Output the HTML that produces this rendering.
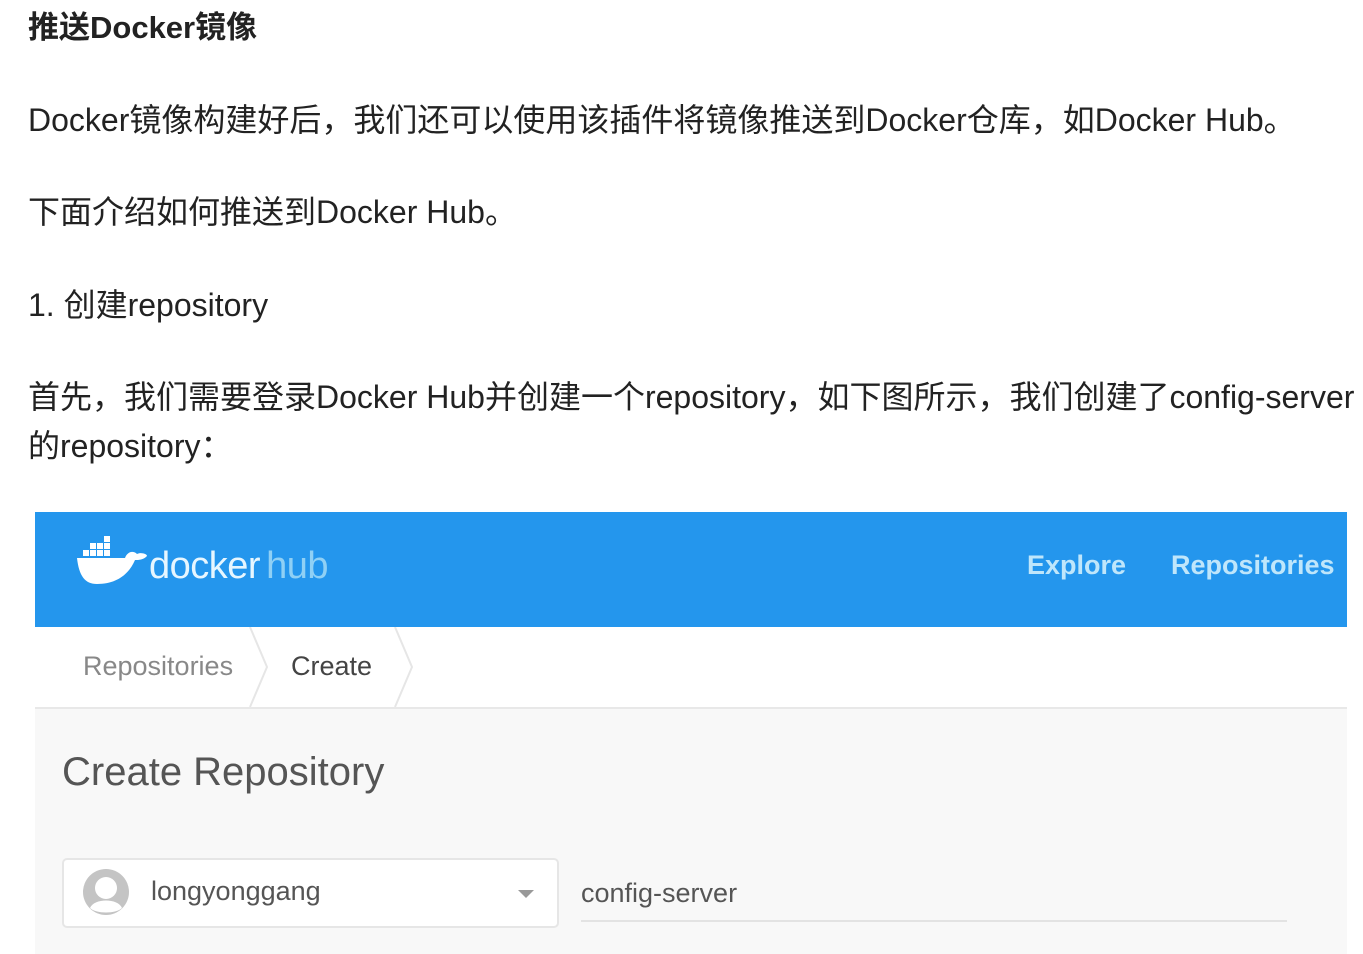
<!DOCTYPE html>
<html><head><meta charset="utf-8"><style>
body{margin:0;width:1363px;height:954px;overflow:hidden;background:#fff;font-family:"Liberation Sans","Noto Sans CJK SC",sans-serif;color:#222;position:relative}
.t{position:absolute;left:28px;white-space:nowrap;font-size:32px;line-height:48px}
.shot{position:absolute;left:35px;top:512px;width:1312px;height:442px;background:#f8f8f8;overflow:hidden}
.bar{position:absolute;left:0;top:0;width:1312px;height:115px;background:#2496ed}
.nav{position:absolute;top:38px;color:#bfe6fb;font-weight:bold;font-size:27px}
.crumb{position:absolute;left:0;top:115px;width:1312px;height:80px;background:#fff;border-bottom:2px solid #e8e8e8}
.g{color:#888;font-size:27px;position:absolute;top:139px}
</style></head><body>
<div class="t" style="top:4px;font-weight:bold;font-size:31px">推送Docker镜像</div>
<div class="t" style="top:96px">Docker镜像构建好后，我们还可以使用该插件将镜像推送到Docker仓库，如Docker Hub。</div>
<div class="t" style="top:188px">下面介绍如何推送到Docker Hub。</div>
<div class="t" style="top:281px">1. 创建repository</div>
<div class="t" style="top:373px">首先，我们需要登录Docker Hub并创建一个repository，如下图所示，我们创建了config-server</div>
<div class="t" style="top:422px">的repository：</div>
<div class="shot">
<div class="bar">
<svg style="position:absolute;left:42px;top:24px" width="72" height="50" viewBox="0 0 72 50"><g fill="#fff"><rect x="6" y="14" width="6" height="6"/><rect x="13" y="14" width="6" height="6"/><rect x="20" y="14" width="6" height="6"/><rect x="27" y="14" width="6" height="6"/><rect x="13" y="7" width="6" height="6"/><rect x="20" y="7" width="6" height="6"/><rect x="27" y="7" width="6" height="6"/><rect x="27" y="0" width="6" height="6"/><path d="M0 22 H48 C50 16 56 14 60 18 C64 16 70 18 70 20 C66 24 62 24 58 24 C52 38 40 48 20 48 C8 48 2 40 0 22Z"/></g></svg>
<div style="position:absolute;left:114px;top:33px;font-size:38px;color:#e6f6ff;letter-spacing:-0.5px">docker<span style="color:#8fd0f5;margin-left:6px">hub</span></div>
<div class="nav" style="left:992px">Explore</div>
<div class="nav" style="left:1136px">Repositories</div>
</div>
<div class="crumb"></div>
<svg style="position:absolute;left:0;top:115px" width="400" height="80"><path d="M215 0 L232 40 L215 80 M360 0 L377 40 L360 80" stroke="#e6e6e6" stroke-width="2" fill="none"/></svg>
<div class="g" style="left:48px">Repositories</div>
<div class="g" style="left:256px;color:#444">Create</div>
<div style="position:absolute;left:27px;top:238px;font-size:40px;color:#555">Create Repository</div>
<div style="position:absolute;left:27px;top:346px;width:493px;height:66px;background:#fff;border:2px solid #e6e6e6;border-radius:5px"></div>
<svg style="position:absolute;left:47px;top:356px" width="48" height="48" viewBox="0 0 48 48"><circle cx="24" cy="24" r="23" fill="#c4c4c4"/><circle cx="24" cy="20" r="11" fill="#fff"/><path d="M8 40 C12 30 36 30 40 40 C34 46 14 46 8 40Z" fill="#fff"/></svg>
<div style="position:absolute;left:116px;top:364px;font-size:27px;color:#555">longyonggang</div>
<div style="position:absolute;left:483px;top:378px;border:8px solid transparent;border-top:8px solid #999"></div>
<div style="position:absolute;left:546px;top:366px;font-size:27px;color:#555">config-server</div>
<div style="position:absolute;left:546px;top:408px;width:706px;height:2px;background:#e3e3e3"></div>
</div>
</body></html>
